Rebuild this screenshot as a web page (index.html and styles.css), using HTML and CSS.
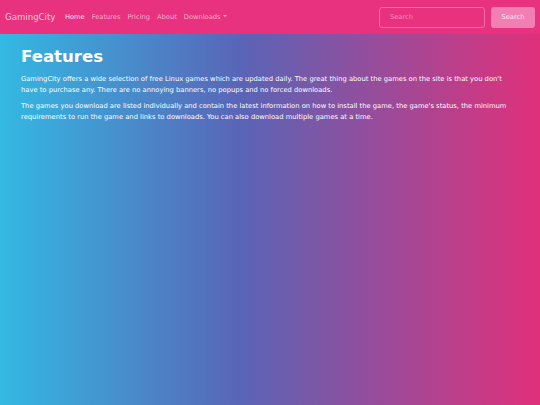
FILE: index.html
```
<!DOCTYPE html>
<html lang="en">
<head>
<meta charset="utf-8">
<title>GamingCity - Features</title>
<link rel="stylesheet" href="styles.css">
</head>
<body>
<nav class="navbar">
  <a class="brand" href="#">GamingCity</a>
  <ul class="nav">
    <li><a class="nav-link active" href="#">Home</a></li>
    <li><a class="nav-link" href="#">Features</a></li>
    <li><a class="nav-link" href="#">Pricing</a></li>
    <li><a class="nav-link" href="#">About</a></li>
    <li><a class="nav-link dropdown" href="#">Downloads<span class="caret"></span></a></li>
  </ul>
  <form class="search">
    <input class="search-input" type="text" placeholder="Search">
    <button class="search-btn" type="button">Search</button>
  </form>
</nav>
<main class="content">
  <h1 class="title">Features</h1>
  <p class="text">GamingCity offers a wide selection of free Linux games which are updated daily. The great thing about the games on the site is that you don't have to purchase any. There are no annoying banners, no popups and no forced downloads.</p>
  <p class="text">The games you download are listed individually and contain the latest information on how to install the game, the game's status, the minimum requirements to run the game and links to downloads. You can also download multiple games at a time.</p>
</main>
</body>
</html>
```
FILE: styles.css
```
html, body {
  margin: 0;
  padding: 0;
  height: 100%;
}
body {
  font-family: "DejaVu Sans", sans-serif;
  font-size: 7px;
  line-height: 1.5;
  color: #fff;
  background: linear-gradient(90deg, #33b9e3 0%, #5a64b6 45%, #e1307a 100%);
  min-height: 405px;
}
.navbar {
  display: flex;
  align-items: center;
  height: 34px;
  padding: 0 5px;
  background: #e8317f;
  box-sizing: border-box;
}
.brand {
  font-size: 8.6px;
  color: #f8c6dd;
  text-decoration: none;
  margin-right: 6px;
}
.nav {
  display: flex;
  list-style: none;
  margin: 0;
  padding: 0;
  flex: 1;
  font-size: 6.7px;
}
.nav-link {
  display: block;
  padding: 0 3.5px;
  color: #f7afcf;
  text-decoration: none;
}
.nav-link.active {
  color: #fde3ef;
}
.caret {
  display: inline-block;
  margin-left: 2px;
  vertical-align: 1.5px;
  border-top: 2.5px solid #f7afcf;
  border-left: 2px solid transparent;
  border-right: 2px solid transparent;
}
.search {
  display: flex;
  gap: 6px;
}
.search-input {
  width: 106px;
  height: 21px;
  box-sizing: border-box;
  border: 1px solid #f36fa8;
  border-radius: 3px;
  background: transparent;
  padding: 0 10px;
  font-family: inherit;
  font-size: 6.7px;
  color: #fff;
  outline: none;
}
.search-input::placeholder {
  color: #f58fbb;
}
.search-btn {
  width: 44px;
  height: 21px;
  box-sizing: border-box;
  border: none;
  border-radius: 3px;
  background: #f27fb3;
  color: #fde6f1;
  font-family: inherit;
  font-size: 6.7px;
  padding: 0;
}
.content {
  padding: 13px 21px 0 21px;
  max-width: 490px;
}
.title {
  font-size: 16.6px;
  font-weight: bold;
  line-height: 1.2;
  margin: 0 0 7.5px 0;
}
.text {
  font-size: 6.75px;
  line-height: 10.5px;
  margin: 0 0 6px 0;
}
```
